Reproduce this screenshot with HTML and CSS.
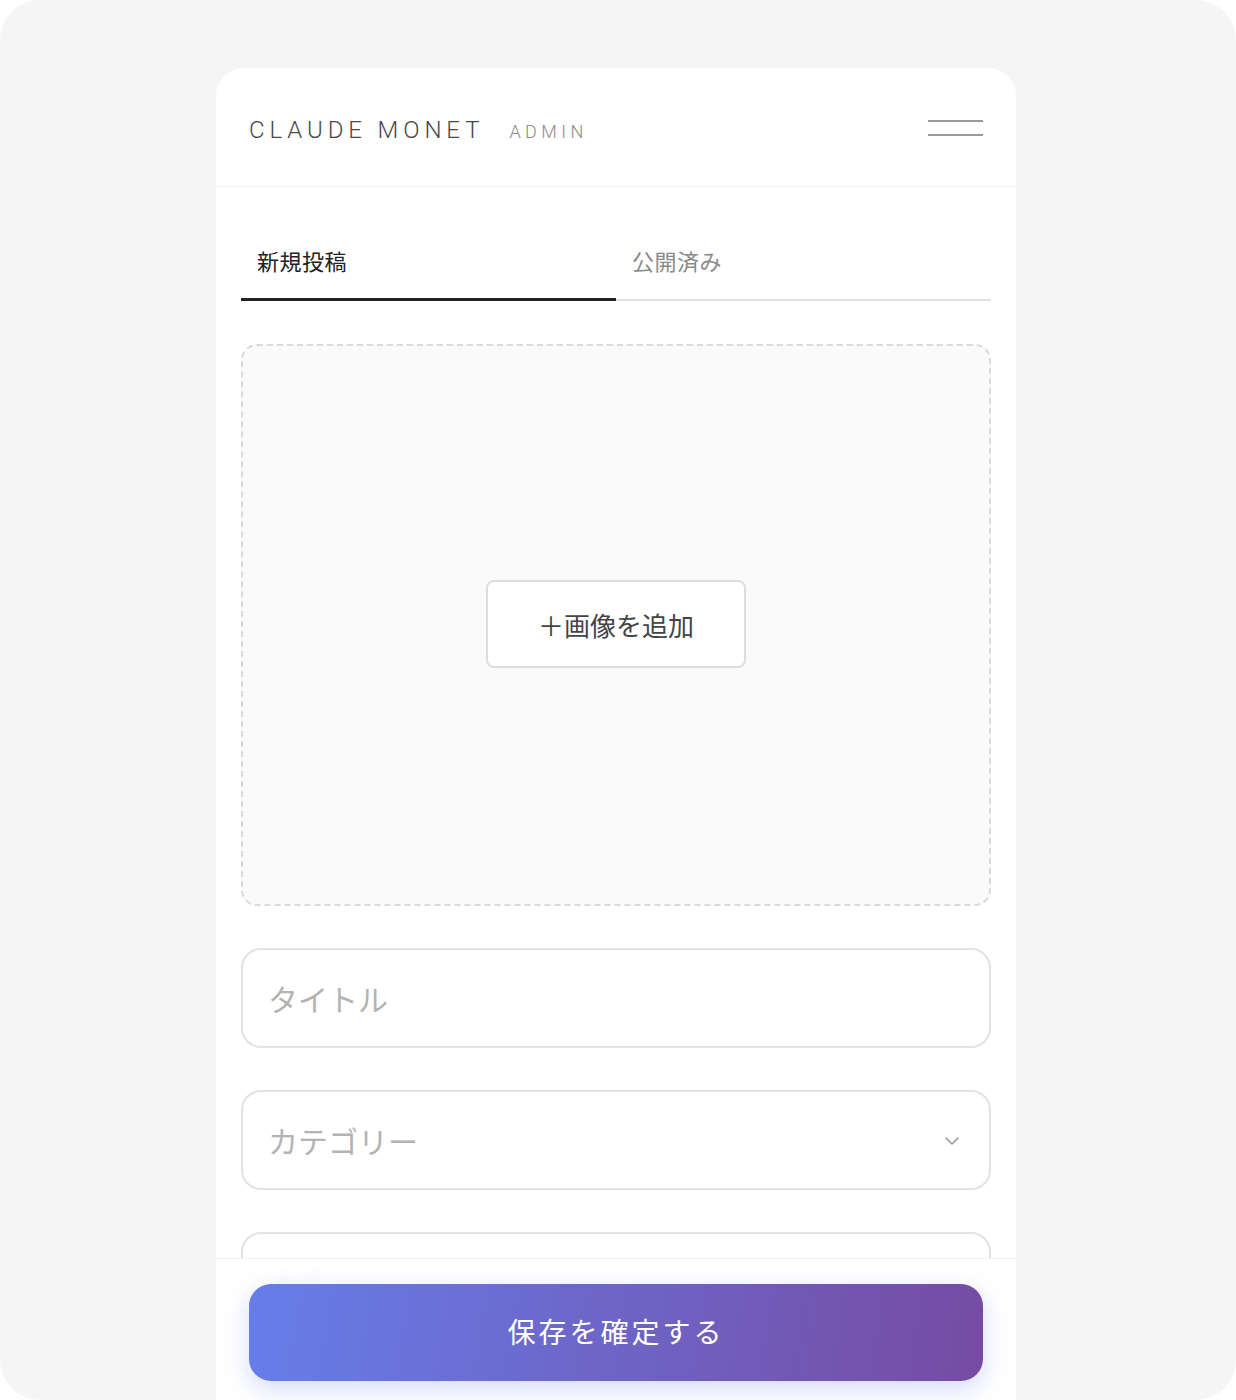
FILE: index.html
```html
<!DOCTYPE html>
<html lang="ja">
<head>
<meta charset="utf-8">
<title>Claude Monet Admin</title>
<link rel="stylesheet" href="styles.css">
</head>
<body>
<div class="frame">
  <div class="card">
    <header class="header">
      <div class="brand">
        <span class="brand-name">CLAUDE MONET</span>
        <span class="brand-sub">ADMIN</span>
      </div>
      <button class="menu" aria-label="menu"><span></span><span></span></button>
    </header>
    <main class="content">
      <nav class="tabs">
        <div class="tab active">新規投稿</div>
        <div class="tab">公開済み</div>
      </nav>
      <div class="upload">
        <button class="add-image">＋画像を追加</button>
      </div>
      <div class="field"><span class="placeholder">タイトル</span></div>
      <div class="field select">
        <span class="placeholder">カテゴリー</span>
        <svg class="chevron" width="14" height="8" viewBox="0 0 14 8"><polyline points="1,1 7,7 13,1" fill="none" stroke="#9a9a9a" stroke-width="1.6" stroke-linecap="round" stroke-linejoin="round"/></svg>
      </div>
      <div class="field"><span class="placeholder">本文</span></div>
    </main>
    <div class="bottom-bar">
      <button class="save">保存を確定する</button>
    </div>
  </div>
</div>
</body>
</html>
```

FILE: styles.css
```css
* { box-sizing: border-box; }
html, body { margin: 0; padding: 0; background: #ffffff; }
body { font-family: "Noto Sans CJK JP", "Noto Sans", sans-serif; }

.frame {
  width: 1236px;
  height: 1400px;
  background: #f5f5f5;
  border-radius: 40px;
  overflow: hidden;
  padding-top: 68px;
  padding-left: 216px;
}

.card {
  position: relative;
  width: 800px;
  height: 1332px;
  background: #ffffff;
  border-radius: 28px 28px 0 0;
  overflow: hidden;
}

.header {
  height: 119px;
  padding: 0 33px;
  display: flex;
  align-items: center;
  justify-content: space-between;
  border-bottom: 1px solid #f0f0f0;
}

.brand {
  display: flex;
  align-items: baseline;
  margin-top: 6px;
  font-family: Roboto, "Liberation Sans", Arial, sans-serif;
  font-weight: 300;
}
.brand-name {
  font-size: 24px;
  letter-spacing: 4.9px;
  color: #484848;
}
.brand-sub {
  margin-left: 25px;
  font-size: 18px;
  letter-spacing: 4.4px;
  color: #8a8a8a;
}

.menu {
  display: flex;
  flex-direction: column;
  gap: 12px;
  width: 55px;
  padding: 0;
  margin-top: 1px;
  border: 0;
  background: none;
}
.menu span {
  display: block;
  height: 2px;
  background: #9a9a9a;
}

.content {
  padding: 37px 25px 0 25px;
}

.tabs {
  display: flex;
}
.tab {
  flex: 1;
  padding: 20px 16px 22px;
  font-size: 22px;
  line-height: 33px;
  letter-spacing: 0.5px;
  color: #8a8a8a;
  border-bottom: 2px solid #e2e2e2;
}
.tab.active {
  color: #222222;
  padding-bottom: 21px;
  border-bottom: 3px solid #222222;
}

.upload {
  margin-top: 43px;
  height: 562px;
  border: 2px dashed #dadada;
  border-radius: 16px;
  background: #fafafa;
  display: flex;
  align-items: center;
  justify-content: center;
}
.add-image {
  width: 260px;
  height: 88px;
  margin-top: -2px;
  border: 2px solid #dddddd;
  border-radius: 8px;
  background: #ffffff;
  font-family: "Noto Sans CJK JP", sans-serif;
  font-size: 26px;
  color: #444444;
  padding: 0;
}

.field {
  margin-top: 42px;
  height: 100px;
  border: 2px solid #e2e2e2;
  border-radius: 20px;
  background: #ffffff;
  padding: 0 30px 0 25px;
  display: flex;
  align-items: center;
  justify-content: space-between;
}
.placeholder {
  font-size: 30px;
  color: #b3b3b3;
}
.chevron { display: block; margin-top: 2px; }

.bottom-bar {
  position: absolute;
  left: 0;
  right: 0;
  bottom: 0;
  padding: 25px 33px 19px;
  background: rgba(255, 255, 255, 0.96);
  border-top: 1px solid #efefef;
}
.save {
  display: block;
  width: 100%;
  height: 97px;
  border: 0;
  border-radius: 22px;
  background: linear-gradient(100deg, #667eea 0%, #764ba2 100%);
  box-shadow: 0 8px 24px rgba(102, 126, 234, 0.28);
  color: #ffffff;
  font-family: "Noto Sans CJK JP", sans-serif;
  font-size: 28px;
  letter-spacing: 3px;
  padding: 0 0 3px;
}
```
